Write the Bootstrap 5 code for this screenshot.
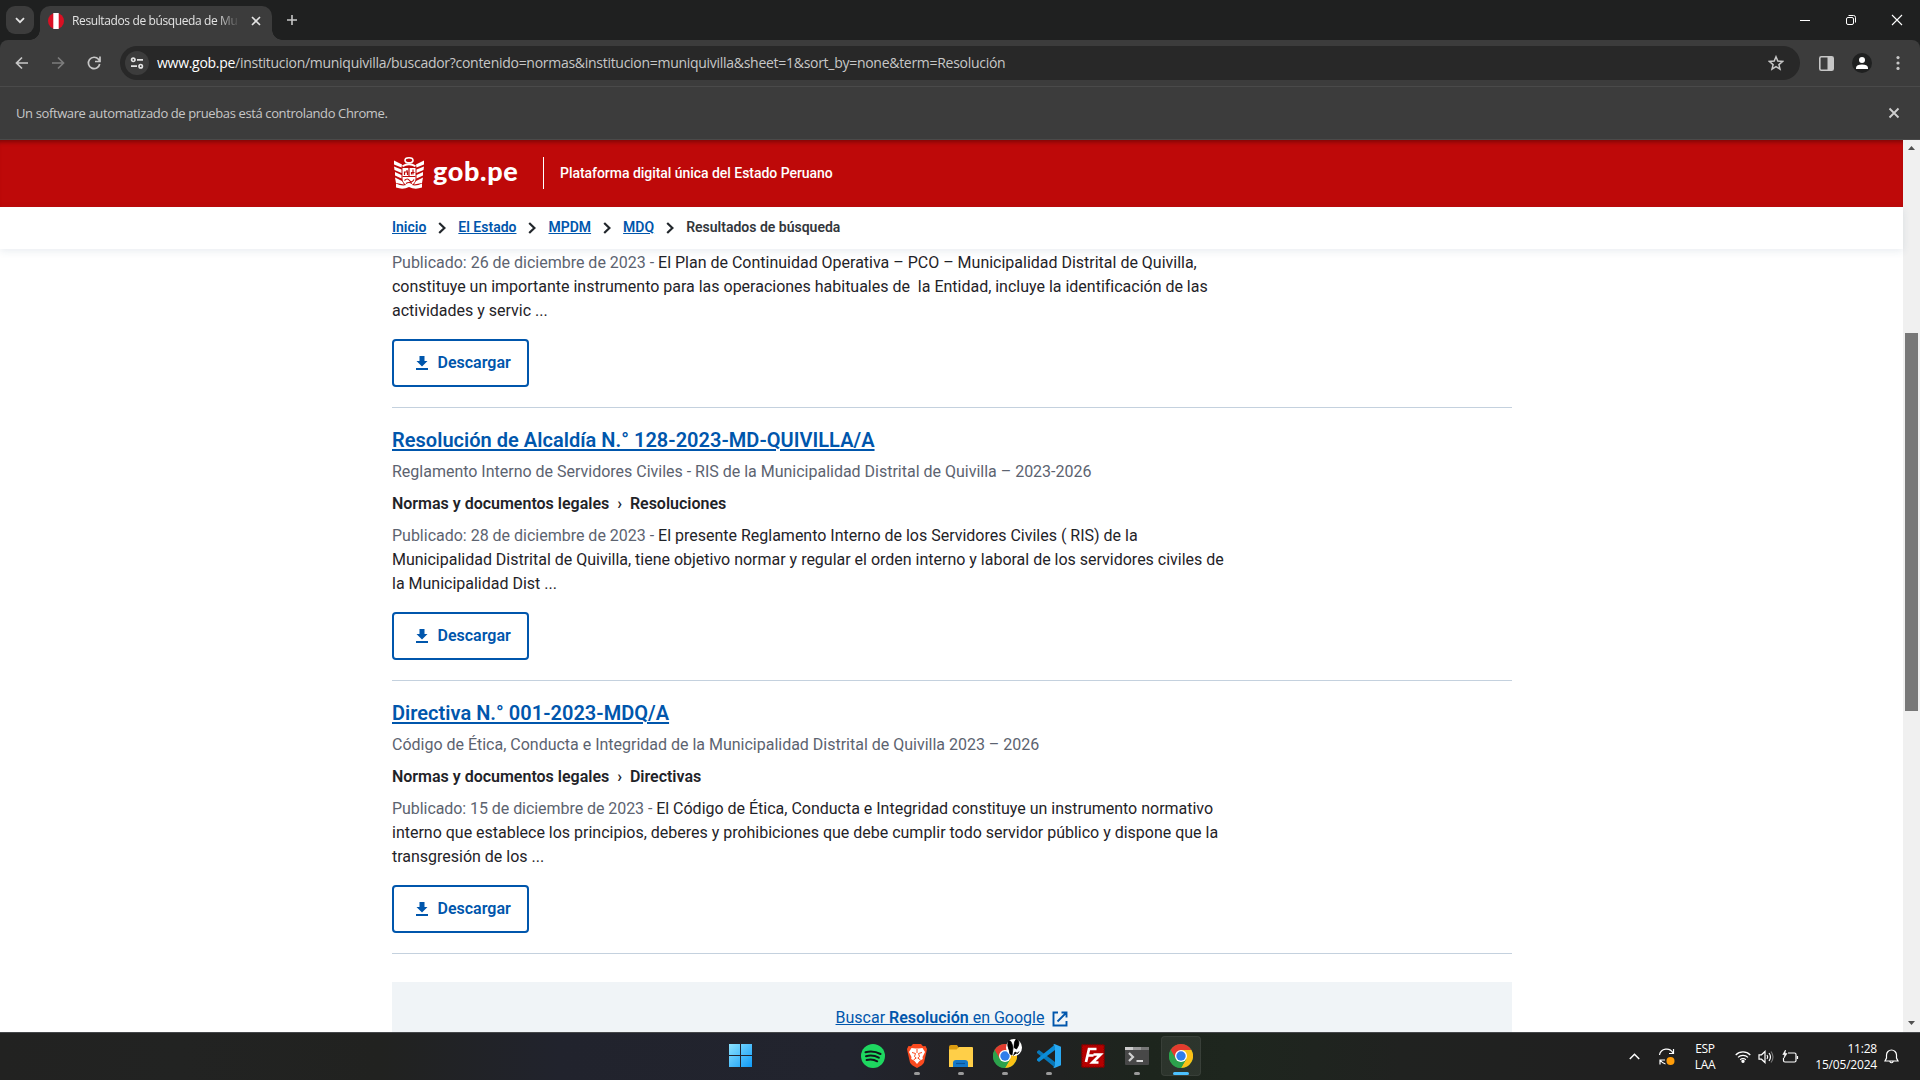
<!DOCTYPE html>
<html lang="es">
<head>
<meta charset="utf-8">
<title>Resultados de búsqueda</title>
<link href="https://cdn.jsdelivr.net/npm/bootstrap@5.3.0/dist/css/bootstrap.min.css" rel="stylesheet">
<style>
html,body{height:1080px;overflow:hidden}
body{font-family:Roboto,"Liberation Sans",sans-serif;font-size:16px;line-height:24px;color:#1f2328;background:#fff}
svg{display:block;flex:none}
.ui-font{font-family:"Open Sans","Noto Sans",sans-serif}
.tabstrip{height:40px;background:#1f2020;padding-left:6px}
.tab-search{width:28px;height:28px;border-radius:9px;background:#3c3c3c;margin-top:6px}
.browser-tab{width:232px;height:34px;margin:6px 0 0 6px;border-radius:10px 10px 0 0;background:#3c3c3c;padding:0 11px 4px 8px;font-size:12px;color:#e3e3e3;position:relative}
.browser-tab::before,.browser-tab::after{content:"";position:absolute;bottom:0;width:10px;height:10px}
.browser-tab::before{left:-10px;background:radial-gradient(circle at 0 0,transparent 9.5px,#3c3c3c 10px)}
.browser-tab::after{right:-10px;background:radial-gradient(circle at 100% 0,transparent 9.5px,#3c3c3c 10px)}
.tab-title{width:168px;margin-left:8px;letter-spacing:-.38px;-webkit-mask-image:linear-gradient(90deg,#000 145px,transparent 168px)}
.winbtns{padding-right:17px;gap:34px}
.new-tab{margin:14px 0 0 14px}
.toolbar{height:46px;background:#3c3c3c;border-radius:8px 8px 0 0;padding-left:14px;padding-right:20px}
.toolbar-back{background:#1f2020}
.omnibox{height:34px;border-radius:17px;background:#282828;margin-left:18px;padding-left:5px;padding-right:16px;font-size:14px;color:#c7c7c7;letter-spacing:-.283px}
.site-info{width:24px;height:24px;border-radius:50%;background:#3c3c3c;margin-right:8px}
.infobar{height:54px;background:#3c3c3c;border-top:1px solid #4a4a4a;border-bottom:1px solid #4a4a4a;padding-left:16px;padding-right:20px;font-size:13px;color:#c7c7c7}
.infobar span{letter-spacing:-.385px}
.viewport{height:892px}
.page{width:1903px}
.redbar{height:67px;background:#be0909;box-shadow:inset 0 5px 4px -3px rgba(0,0,0,.35)}
.redbar .site{height:65px}
.site{width:1120px;margin-left:392px}
.brand{font-family:Lato,sans-serif;font-weight:900;font-size:27px;line-height:32px;color:#fff;margin:0 0 3px 7px;width:86px;white-space:nowrap;letter-spacing:.65px}
.brand-rule{width:1px;height:32px;background:#fff;margin:1px 16px 0 24px}
.slogan{font-size:14px;font-weight:500;color:#fff;letter-spacing:-.04px}
.crumbs{height:42px;font-size:14px;box-shadow:0 2px 8px rgba(50,80,120,.11);position:relative;z-index:2;background:#fff}
.crumbs .site{gap:12px;height:42px}
.crumbs a,.result h3 a,.google a{color:#0056ac;text-decoration:underline}
.crumbs a,.crumbs span{font-weight:600;white-space:nowrap;padding-bottom:2px}
.crumbs span{color:#33373c}
.result{border-top:1px solid #c4d1de;padding:20px 0}
.result.cut{border:0;padding-top:2px}
.result h3{font-size:20px;line-height:24px;font-weight:600;margin:0 0 8px;letter-spacing:.025px}
.result h3 a{text-decoration-thickness:2px;text-underline-offset:2px}
.result p{margin:0 0 8px;white-space:nowrap;letter-spacing:-.008px}
.result .excerpt{margin-bottom:16px}
.muted{color:#5c6370}
.cat{font-weight:600}
.btn-dl{width:137px;height:48px;border:2px solid #0056ac;border-radius:4px;color:#0056ac;font-weight:600;padding:0 0 0 22px;gap:9.5px;background:#fff}
.google{height:50px;margin-top:28px;background:#f0f4f7;padding-top:24px}
.google b{font-weight:600}
.google-line{border-top:1px solid #c4d1de}
.scroller{width:17px;background:#f0f0f0;padding:6px 2px 7px}
.thumb{width:13px;height:378px;margin-top:183px;background:#787878}
.taskbar{height:48px;border-top:1px solid #45474a;background:linear-gradient(90deg,#222221 0,#222322 180px,#212220 380px,#21232d 560px,#22242e 850px,#212225 960px,#202221 1060px,#1d251d 1150px,#1e261e 1230px,#202220 1400px,#202020 1600px)}
.task-slot{width:44px;height:47px;padding-top:11px;position:relative}
.task-slot.start{margin-right:89px}
.task-slot.running::after{content:"";position:absolute;left:19px;top:39px;width:6px;height:3px;border-radius:2px;background:#9a9a9a}
.task-slot.current::after{content:"";position:absolute;left:14px;top:39px;width:16px;height:3px;border-radius:2px;background:#4cc2ff;z-index:1}
.task-slot.current::before{content:"";position:absolute;left:2px;top:3px;width:40px;height:40px;border-radius:4px;background:rgba(255,255,255,.07);border:1px solid rgba(255,255,255,.06)}
.task-slot svg{position:relative}
.profile-badge{left:23px;top:6px}
.apps{margin-left:718px}
.tray{font-size:12px;line-height:16px;color:#fff;padding-right:21px}
.lang{margin-left:17px;width:24px;letter-spacing:-.3px}
.clock{margin-left:16px;width:62px;letter-spacing:-.2px}
</style>
</head>
<body>
<svg width="0" height="0" class="position-absolute">
<defs>
<symbol id="dl" viewBox="0 0 12 14"><path d="M3.500 0h5v5H11.500L6 10.500.5 5h3z"/><path d="M0 12h12v2H0z"/></symbol>
<symbol id="chev" viewBox="0 0 8 12"><path d="M1.200 1l5.200 5-5.200 5" fill="none" stroke="#22272c" stroke-width="2.200"/></symbol>
<symbol id="chrome" viewBox="0 0 24 24"><circle cx="12" cy="12" r="12" fill="#2ca24c"/><path d="M1.600 6A12 12 0 0 1 22.400 6H12L6.800 15z" fill="#e33b2e"/><path d="M22.400 6A12 12 0 0 1 12 24l5.200-9L12 6z" fill="#fbc116"/><path d="M1.600 6A12 12 0 0 0 12 24l5.200-9H6.800z" fill="#2ca24c"/><circle cx="12" cy="12" r="6" fill="#fff"/><circle cx="12" cy="12" r="4.700" fill="#2f7de9"/></symbol>
</defs>
</svg>

<div class="ui-font">
 <div class="tabstrip d-flex">
  <div class="tab-search d-flex align-items-center justify-content-center"><svg width="10" height="7" viewBox="0 0 10 7" fill="none" stroke="#e3e3e3" stroke-width="1.800"><path d="M1 1.200l4 4 4-4"/></svg></div>
  <div class="browser-tab d-flex align-items-center">
   <svg width="16" height="16" viewBox="0 0 16 16"><circle cx="8" cy="8" r="8" fill="#d91023"/><path d="M5.300 0h5.400v16H5.300z" fill="#fff"/></svg>
   <div class="tab-title text-nowrap">Resultados de búsqueda de Mu</div>
   <svg class="ms-auto" width="10" height="10" viewBox="0 0 10 10" stroke="#e3e3e3" stroke-width="1.600"><path d="M1 1l8 8M9 1L1 9"/></svg>
  </div>
  <svg class="new-tab" width="12" height="12" viewBox="0 0 12 12" stroke="#c7c7c7" stroke-width="1.600"><path d="M6 1v10M1 6h10"/></svg>
  <div class="winbtns d-flex align-items-center ms-auto">
   <svg width="12" height="12" viewBox="0 0 12 12" stroke="#fff"><path d="M1 6.500h10"/></svg>
   <svg width="12" height="12" viewBox="0 0 12 12" fill="none" stroke="#fff"><rect x="1.500" y="3.500" width="7" height="7" rx="1.500"/><path d="M3.500 1.500h5a2 2 0 0 1 2 2v5"/></svg>
   <svg width="12" height="12" viewBox="0 0 12 12" stroke="#fff" stroke-width="1.100"><path d="M1 1l10 10M11 1L1 11"/></svg>
  </div>
 </div>
 <div class="toolbar-back"><div class="toolbar d-flex align-items-center">
  <svg width="16" height="16" viewBox="0 0 16 16" fill="none" stroke="#c7c7c7" stroke-width="1.700"><path d="M14 8H3M8 2.500L2.500 8 8 13.500"/></svg>
  <svg style="margin-left:20px" width="16" height="16" viewBox="0 0 16 16" fill="none" stroke="#7c7c7c" stroke-width="1.700"><path d="M2 8h11M8 2.500L13.500 8 8 13.500"/></svg>
  <svg style="margin-left:20px" width="16" height="16" viewBox="0 0 16 16" fill="none" stroke="#c7c7c7" stroke-width="1.700"><path d="M13.700 9A5.700 5.700 0 1 1 12.500 4.300L13.600 5.800M14 1.500v5H9"/></svg>
  <div class="omnibox d-flex align-items-center flex-grow-1">
   <div class="site-info d-flex align-items-center justify-content-center"><svg width="14" height="12" viewBox="0 0 14 12" fill="none" stroke="#e3e3e3" stroke-width="1.700"><circle cx="3.300" cy="2.800" r="1.700"/><path d="M7 2.800h6M1 9.200h6"/><circle cx="10.700" cy="9.200" r="1.700"/></svg></div>
   <span class="text-nowrap"><span class="text-white">www.gob.pe</span>/institucion/muniquivilla/buscador?contenido=normas&amp;institucion=muniquivilla&amp;sheet=1&amp;sort_by=none&amp;term=Resolución</span>
   <svg class="ms-auto" width="16" height="16" viewBox="0 0 16 16" fill="none" stroke="#c7c7c7" stroke-width="1.500"><path d="M8 1.800l1.800 4.300 4.700.4-3.600 3.100 1.100 4.600L8 11.700l-4 2.500 1.100-4.600L1.500 6.500l4.700-.4z"/></svg>
  </div>
  <svg style="margin-left:19px" width="15" height="15" viewBox="0 0 15 15"><rect x=".8" y=".8" width="13.400" height="13.400" rx="1.500" fill="none" stroke="#c7c7c7" stroke-width="1.600"/><path d="M8.500 1H14v13H8.500z" fill="#c7c7c7"/></svg>
  <svg style="margin-left:18px" width="20" height="20" viewBox="0 0 20 20"><circle cx="10" cy="10" r="10" fill="#1f2020"/><circle cx="10" cy="7" r="3" fill="#fff"/><path d="M4 16v-1.500Q4.500 11.500 10 11.500t6 3V16z" fill="#fff"/></svg>
  <svg style="margin-left:24px" width="4" height="16" viewBox="0 0 4 16" fill="#c7c7c7"><circle cx="2" cy="2.600" r="1.600"/><circle cx="2" cy="8" r="1.600"/><circle cx="2" cy="13.400" r="1.600"/></svg>
 </div></div>
 <div class="infobar d-flex align-items-center"><span>Un software automatizado de pruebas está controlando Chrome.</span>
  <svg class="ms-auto" width="12" height="12" viewBox="0 0 12 12" stroke="#d0d0d0" stroke-width="1.800"><path d="M1.500 1.500l9 9M10.500 1.500l-9 9"/></svg></div>
</div>

<div class="viewport d-flex overflow-hidden">
 <div class="page">
  <header class="redbar"><div class="site d-flex align-items-center">
   <svg width="34" height="34" viewBox="-1 0 34 34"><g fill="#fff"><path d="M1 4.500l8 4-.5 3L1 8.500zM1 10.500l7.500 3v3.500L1.500 14zM2 16l6.500 3v3.500L2 19.500zM2 21.500l7 3.500 2 3.500-8-1.500zM31 4.500l-8 4 .5 3L31 8.500zM31 10.500l-7.500 3v3.500l7-3zM30 16l-6.500 3v3.500l6.500-3zM30 21.500L23 25l-2 3.500 8-1.500z"/><path d="M3 27.500q7 3.500 13 .5 6 3 13-.5v4q-7 2.500-13-.5-6 3-13 .5z"/><path d="M9.500 12h13v11q0 5-6.500 7.500-6.500-2.500-6.500-7.500z"/></g><ellipse cx="16" cy="4.300" rx="4" ry="2.600" fill="none" stroke="#fff" stroke-width="1.600"/><path d="M9.500 10.200q6.500-4 13 0" fill="none" stroke="#fff" stroke-width="1.900"/><path d="M16 12v8M9.500 20.500h13M11.500 19v-3h3v3M14 16v-2M18.500 18.500v-2h3M20 13.500v5" stroke="#be0909" stroke-width="1.200" fill="none"/><path d="M11.500 24.500q3-3 5 0t4.500-1M13 27.500q3-2 6 0" stroke="#be0909" stroke-width="1.200" fill="none"/></svg>
   <div class="brand">gob.pe</div><div class="brand-rule"></div><div class="slogan">Plataforma digital única del Estado Peruano</div>
  </div></header>
  <nav class="crumbs"><div class="site d-flex align-items-center">
   <a href="#">Inicio</a><svg width="8" height="12"><use href="#chev"/></svg><a href="#">El Estado</a><svg width="8" height="12"><use href="#chev"/></svg><a href="#">MPDM</a><svg width="8" height="12"><use href="#chev"/></svg><a href="#">MDQ</a><svg width="8" height="12"><use href="#chev"/></svg><span>Resultados de búsqueda</span>
  </div></nav>
  <main class="site">
   <article class="result cut">
    <p class="excerpt"><span class="muted">Publicado: 26 de diciembre de 2023 - </span>El Plan de Continuidad Operativa – PCO – Municipalidad Distrital de Quivilla,<br>constituye un importante instrumento para las operaciones habituales de &nbsp;la Entidad, incluye la identificación de las<br>actividades y servic ...</p>
    <a class="btn-dl d-flex align-items-center text-decoration-none" href="#"><svg width="12" height="14" fill="#0056ac"><use href="#dl"/></svg>Descargar</a>
   </article>
   <article class="result">
    <h3><a href="#">Resolución de Alcaldía N.° 128-2023-MD-QUIVILLA/A</a></h3>
    <p class="muted">Reglamento Interno de Servidores Civiles - RIS de la Municipalidad Distrital de Quivilla – 2023-2026</p>
    <p class="cat">Normas y documentos legales &nbsp;›&nbsp; Resoluciones</p>
    <p class="excerpt"><span class="muted">Publicado: 28 de diciembre de 2023 - </span>El presente Reglamento Interno de los Servidores Civiles ( RIS) de la<br>Municipalidad Distrital de Quivilla, tiene objetivo normar y regular el orden interno y laboral de los servidores civiles de<br>la Municipalidad Dist ...</p>
    <a class="btn-dl d-flex align-items-center text-decoration-none" href="#"><svg width="12" height="14" fill="#0056ac"><use href="#dl"/></svg>Descargar</a>
   </article>
   <article class="result">
    <h3><a href="#">Directiva N.° 001-2023-MDQ/A</a></h3>
    <p class="muted">Código de Ética, Conducta e Integridad de la Municipalidad Distrital de Quivilla 2023 – 2026</p>
    <p class="cat">Normas y documentos legales &nbsp;›&nbsp; Directivas</p>
    <p class="excerpt"><span class="muted" style="letter-spacing:-.06px">Publicado: 15 de diciembre de 2023 - </span>El Código de Ética, Conducta e Integridad constituye un instrumento normativo<br>interno que establece los principios, deberes y prohibiciones que debe cumplir todo servidor público y dispone que la<br>transgresión de los ...</p>
    <a class="btn-dl d-flex align-items-center text-decoration-none" href="#"><svg width="12" height="14" fill="#0056ac"><use href="#dl"/></svg>Descargar</a>
   </article>
   <div class="google-line"></div>
   <div class="google d-flex justify-content-center align-items-start"><a href="#">Buscar <b>Resolución</b> en Google</a>
    <svg style="margin:5px 0 0 8px" width="16" height="16" viewBox="0 0 16 16" fill="none" stroke="#0056ac" stroke-width="1.900"><path d="M6 1.500H1.500v13h13V10M9.500 1.500h5v5M14.500 1.500l-9 9"/></svg></div>
  </main>
 </div>
 <div class="scroller d-flex flex-column align-items-center">
  <svg width="7" height="4" viewBox="0 0 7 4" fill="#505050"><path d="M0 4h7L3.500 0z"/></svg>
  <div class="thumb"></div>
  <svg class="mt-auto" width="7" height="4" viewBox="0 0 7 4" fill="#505050"><path d="M0 0h7L3.500 4z"/></svg>
 </div>
</div>

<div class="taskbar d-flex">
 <div class="apps d-flex">
  <div class="task-slot start d-flex justify-content-center"><svg width="23" height="23" viewBox="0 0 23 23"><defs><linearGradient id="wg" x1="0" y1="0" x2="1" y2="1"><stop offset="0" stop-color="#8de3ff"/><stop offset="1" stop-color="#0f9bf8"/></linearGradient></defs><path fill="url(#wg)" d="M0 0h11v11H0zM12 0h11v11H12zM0 12h11v11H0zM12 12h11v11H12z"/></svg></div>
  <div class="task-slot d-flex justify-content-center"><svg width="24" height="24" viewBox="0 0 24 24"><circle cx="12" cy="12" r="12" fill="#1ed760"/><path d="M4.500 8.200q8-2 15 1.800M5 12.200q7-1.700 12.800 1.500M5.600 16q6-1.400 10.600 1.300" fill="none" stroke="#11151a" stroke-width="2" stroke-linecap="round"/></svg></div>
  <div class="task-slot running d-flex justify-content-center"><svg width="20" height="24" viewBox="0 0 20 24"><path d="M6 0h8l2 2.300 2.500-.3L20 5l-.7 3.500L17 18.500Q16 21 10 24 4 21 3 18.500L.7 8.500 0 5 1.500 2l2.500.3z" fill="#fb4a1f"/><path d="M4.500 4l4 .6h3l4-.6L18 8l-2.500 5 .3 2-3.300 2L10 20l-2.500-3-3.300-2 .3-2L2 8z" fill="#fff"/><path d="M5 8.500l3.500 1-1 3 1.700 1.500L6.500 16M15 8.500l-3.500 1 1 3-1.700 1.500 2.700 2M10 5v4" fill="none" stroke="#fb4a1f" stroke-width="1"/></svg></div>
  <div class="task-slot running d-flex justify-content-center"><svg width="24" height="24" viewBox="0 0 24 24"><path d="M0 3q0-2 2-2h6l2 3v5H0z" fill="#dc9c10"/><path d="M0 5.500h7.500L10 3h13q1 0 1 1v19H0z" fill="#ffcf48"/><path d="M4 23v-4q0-3 3-3h9q3 0 3 3v4z" fill="#1478c8"/><path d="M7 19.500h9" stroke="#0b5397" stroke-width="1.200"/></svg></div>
  <div class="task-slot running d-flex justify-content-center"><svg width="24" height="24"><use href="#chrome"/></svg>
   <svg class="profile-badge position-absolute" width="16" height="17" viewBox="0 0 16 17"><ellipse cx="8" cy="8.500" rx="8" ry="8.500" fill="#fff"/><path d="M2.500 2Q5 1 6 5l1 4-1 7Q3 15.500 3.500 12 .5 6 2.500 2zM10 .3Q14 1 12.500 6.500L10.500 10 8 8.500Q8 2 10 .3zM7.500 16.500l1.500-3.500 2.500 1.500 1.500-2" fill="#000" stroke="#000" stroke-width=".8"/></svg></div>
  <div class="task-slot running d-flex justify-content-center"><svg width="24" height="24" viewBox="0 0 24 24"><path d="M0 7.500L2 6l16 12v5.500L0 9z" fill="#0878b9"/><path d="M0 16.500L2 18 18 6V.5L0 15z" fill="#0b8cd7"/><path d="M17.500 0L24 2.800v18.400L17.500 24 16 23q2 0 2-2V3q0-2-2-2z" fill="#29a9f2"/></svg></div>
  <div class="task-slot d-flex justify-content-center"><svg width="24" height="24" viewBox="0 0 24 24"><rect x=".8" y=".8" width="22.400" height="22.400" fill="#b50000" stroke="#7d0000" stroke-width="1.500" stroke-dasharray="1.500 1"/><path d="M5 18L8 5h7.500M6.500 11.500h6M12.500 10.500h7l-8 8h6" fill="none" stroke="#fff" stroke-width="2.700"/></svg></div>
  <div class="task-slot running d-flex justify-content-center"><svg width="24" height="24" viewBox="0 0 24 24"><rect y="3" width="24" height="18" rx="1" fill="#484848"/><path d="M0 3h8v3H0z" fill="#ccc"/><path d="M8 3h8v3H8z" fill="#999"/><path d="M16 3h8v3h-8z" fill="#777"/><path d="M4 9l4 4-4 4" fill="none" stroke="#d0d0d0" stroke-width="2.200"/><path d="M11.500 17h6.500" stroke="#fff" stroke-width="1.600"/></svg></div>
  <div class="task-slot current d-flex justify-content-center"><svg width="24" height="24"><use href="#chrome"/></svg></div>
 </div>
 <div class="tray ui-font d-flex align-items-center ms-auto">
  <svg width="11" height="7" viewBox="0 0 11 7" fill="none" stroke="#fff" stroke-width="1.500"><path d="M.8 6l4.700-4.700L10.200 6"/></svg>
  <svg style="margin-left:18px" width="18" height="18" viewBox="0 0 18 18" fill="none" stroke="#fff" stroke-width="1.200"><path d="M1.500 7A7.200 7.200 0 0 1 15 5M15.500 1v4.500H11M2 16.500V12h5M2.500 12.500q2 3 5 3.500"/><circle cx="12.500" cy="13" r="4" fill="#ff9d0a" stroke="none"/></svg>
  <div class="lang text-center">ESP<br>LAA</div>
  <svg style="margin-left:18px" width="16" height="13" viewBox="0 0 16 13" fill="none" stroke="#fff" stroke-width="1.200"><path d="M.7 5a10.300 10.300 0 0 1 14.600 0M3 7.400a7 7 0 0 1 10 0M5.200 9.700a4 4 0 0 1 5.600 0"/><circle cx="8" cy="11.300" r="1.100" fill="#fff"/></svg>
  <svg style="margin-left:7px" width="16" height="14" viewBox="0 0 16 14" fill="none" stroke="#fff" stroke-width="1.200"><path d="M1 4.800h2.500L7 1.500v11L3.500 9.200H1zM9 5q1.500 2 0 4M11 3q3 4 0 8"/><path d="M13 1.500q4 5.500 0 11" stroke="#777"/></svg>
  <svg style="margin-left:8px" width="17" height="14" viewBox="0 0 17 14" fill="none" stroke="#fff" stroke-width="1.200"><path d="M6 3h6.500Q14 3 14 4.500v6q0 1.500-1.500 1.500H3Q1.500 12 1.500 10.500V8M15.500 6v3"/><path d="M3.500 0L.8 4.500h2L2 8l3-4.500H3z" fill="#fff" stroke-width=".6"/></svg>
  <div class="clock text-end">11:28<br>15/05/2024</div>
  <svg style="margin-left:7px" width="15" height="15" viewBox="0 0 15 15" fill="none" stroke="#fff" stroke-width="1.200"><path d="M1 12h13L12.500 9V6a5 5 0 0 0-10 0v3zM5.700 12.500q1.800 2.500 3.600 0"/></svg>
 </div>
</div>
<script src="https://cdn.jsdelivr.net/npm/bootstrap@5.3.0/dist/js/bootstrap.bundle.min.js"></script>
</body>
</html>
